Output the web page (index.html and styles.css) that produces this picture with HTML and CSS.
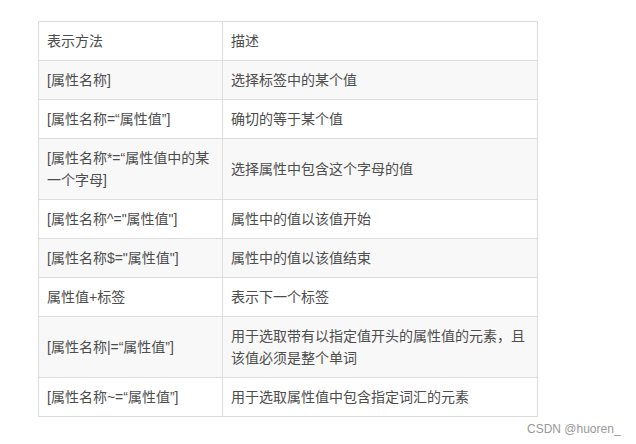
FILE: index.html
```html
<!DOCTYPE html>
<html lang="zh-CN">
<head>
<meta charset="utf-8">
<link rel="stylesheet" href="styles.css">
</head>
<body>
<div class="page">
  <table class="sel-table">
    <colgroup><col class="c1"><col class="c2"></colgroup>
    <tr><td>表示方法</td><td>描述</td></tr>
    <tr class="alt"><td>[属性名称]</td><td>选择标签中的某个值</td></tr>
    <tr><td>[属性名称=“属性值”]</td><td>确切的等于某个值</td></tr>
    <tr class="alt"><td>[属性名称*=“属性值中的某一个字母]</td><td>选择属性中包含这个字母的值</td></tr>
    <tr><td>[属性名称^="属性值"]</td><td>属性中的值以该值开始</td></tr>
    <tr class="alt"><td>[属性名称$="属性值"]</td><td>属性中的值以该值结束</td></tr>
    <tr><td>属性值+标签</td><td>表示下一个标签</td></tr>
    <tr class="alt"><td>[属性名称|=“属性值”]</td><td>用于选取带有以指定值开头的属性值的元素，且该值必须是整个单词</td></tr>
    <tr><td>[属性名称~=“属性值”]</td><td>用于选取属性值中包含指定词汇的元素</td></tr>
  </table>
  <div class="mark">CSDN @huoren_</div>
</div>
</body>
</html>
```
FILE: styles.css
```css
html, body {
  margin: 0;
  padding: 0;
  background: #fff;
}
.page {
  width: 636px;
  height: 444px;
  padding: 21px 0 0 38px;
  box-sizing: border-box;
  position: relative;
  font-family: "Liberation Sans", "Noto Sans CJK SC", sans-serif;
}
.sel-table {
  border-collapse: collapse;
  table-layout: fixed;
  width: 499px;
  font-size: 14px;
  line-height: 22px;
  color: #4d4d4d;
}
.c1 { width: 184px; }
.c2 { width: 315px; }
.sel-table td {
  border: 1px solid #dddddd;
  padding: 8px 8px 8px 8px;
  vertical-align: middle;
  word-break: break-all;
}
.sel-table tr.alt td {
  background: #f8f8f8;
}
.mark {
  position: absolute;
  left: 527px;
  top: 421px;
  font-size: 12px;
  line-height: 16px;
  color: #999999;
  white-space: nowrap;
}
```
